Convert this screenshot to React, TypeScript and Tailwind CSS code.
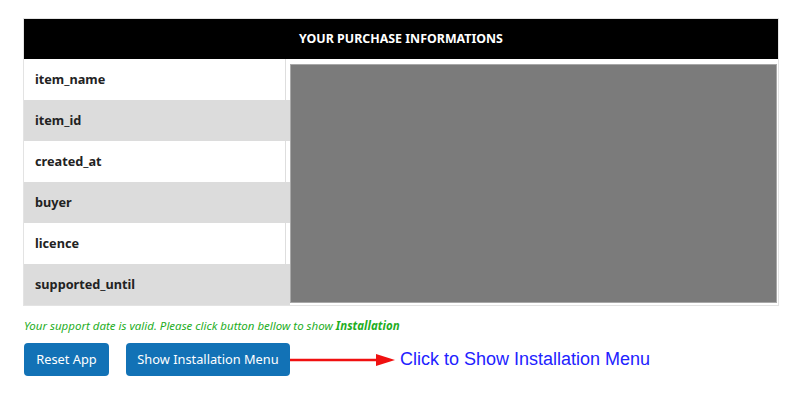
const rows = [
  { label: "item_name", shade: false },
  { label: "item_id", shade: true },
  { label: "created_at", shade: false },
  { label: "buyer", shade: true },
  { label: "licence", shade: false },
  { label: "supported_until", shade: true },
];

export default function App() {
  return (
    <div className="w-[809px] h-[403px] bg-white font-['Noto_Sans',sans-serif] text-[#222]">
      <div className="pt-[18px] pl-[23px]">
        {/* purchase table */}
        <div className="w-[756px] border border-[#e3e3e3]">
          <div className="h-[40px] bg-black flex items-center justify-center text-white text-[12.4px] font-bold">
            YOUR PURCHASE INFORMATIONS
          </div>
          <div className="flex">
            <div className="w-[266px] flex flex-col">
              {rows.map((r) => (
                <div
                  key={r.label}
                  className={r.shade ? "h-[41px] bg-[#dcdcdc] flex" : "h-[41px] bg-white flex"}
                >
                  <div
                    className={
                      r.shade
                        ? "w-[262px] flex items-center pl-[11px] text-[12.7px] font-bold"
                        : "w-[262px] flex items-center pl-[11px] text-[12.7px] font-bold border-r border-[#dedede]"
                    }
                  >
                    {r.label}
                  </div>
                </div>
              ))}
            </div>
            <div className="flex-1 pt-[5px] pb-[2px] pr-px">
              <div className="h-full bg-[#7b7b7b] border border-[#a8a8a8]" />
            </div>
          </div>
        </div>
      </div>

      <p className="mt-[11px] ml-[24px] text-[11.5px] italic text-[#1fae1f]">
        Your support date is valid. Please click button bellow to show <b>Installation</b>
      </p>

      <div className="mt-[9px] ml-[24px] flex items-center">
        <button className="w-[85px] h-[33px] rounded-[4px] bg-[#1272b6] text-white text-[12.8px]">
          Reset App
        </button>
        <button className="ml-[17px] w-[164px] h-[33px] rounded-[4px] bg-[#1272b6] text-white text-[12.8px]">
          Show Installation Menu
        </button>
        <svg width="106" height="14" viewBox="0 0 106 14" className="shrink-0">
          <line x1="0" y1="7" x2="88" y2="7" stroke="#f01010" strokeWidth="2.5" />
          <polygon points="86,1 105,7 86,13" fill="#f01010" />
        </svg>
        <span className="ml-[4px] text-[18px] text-[#2222ff] font-['Liberation_Sans',sans-serif]">
          Click to Show Installation Menu
        </span>
      </div>
    </div>
  );
}
